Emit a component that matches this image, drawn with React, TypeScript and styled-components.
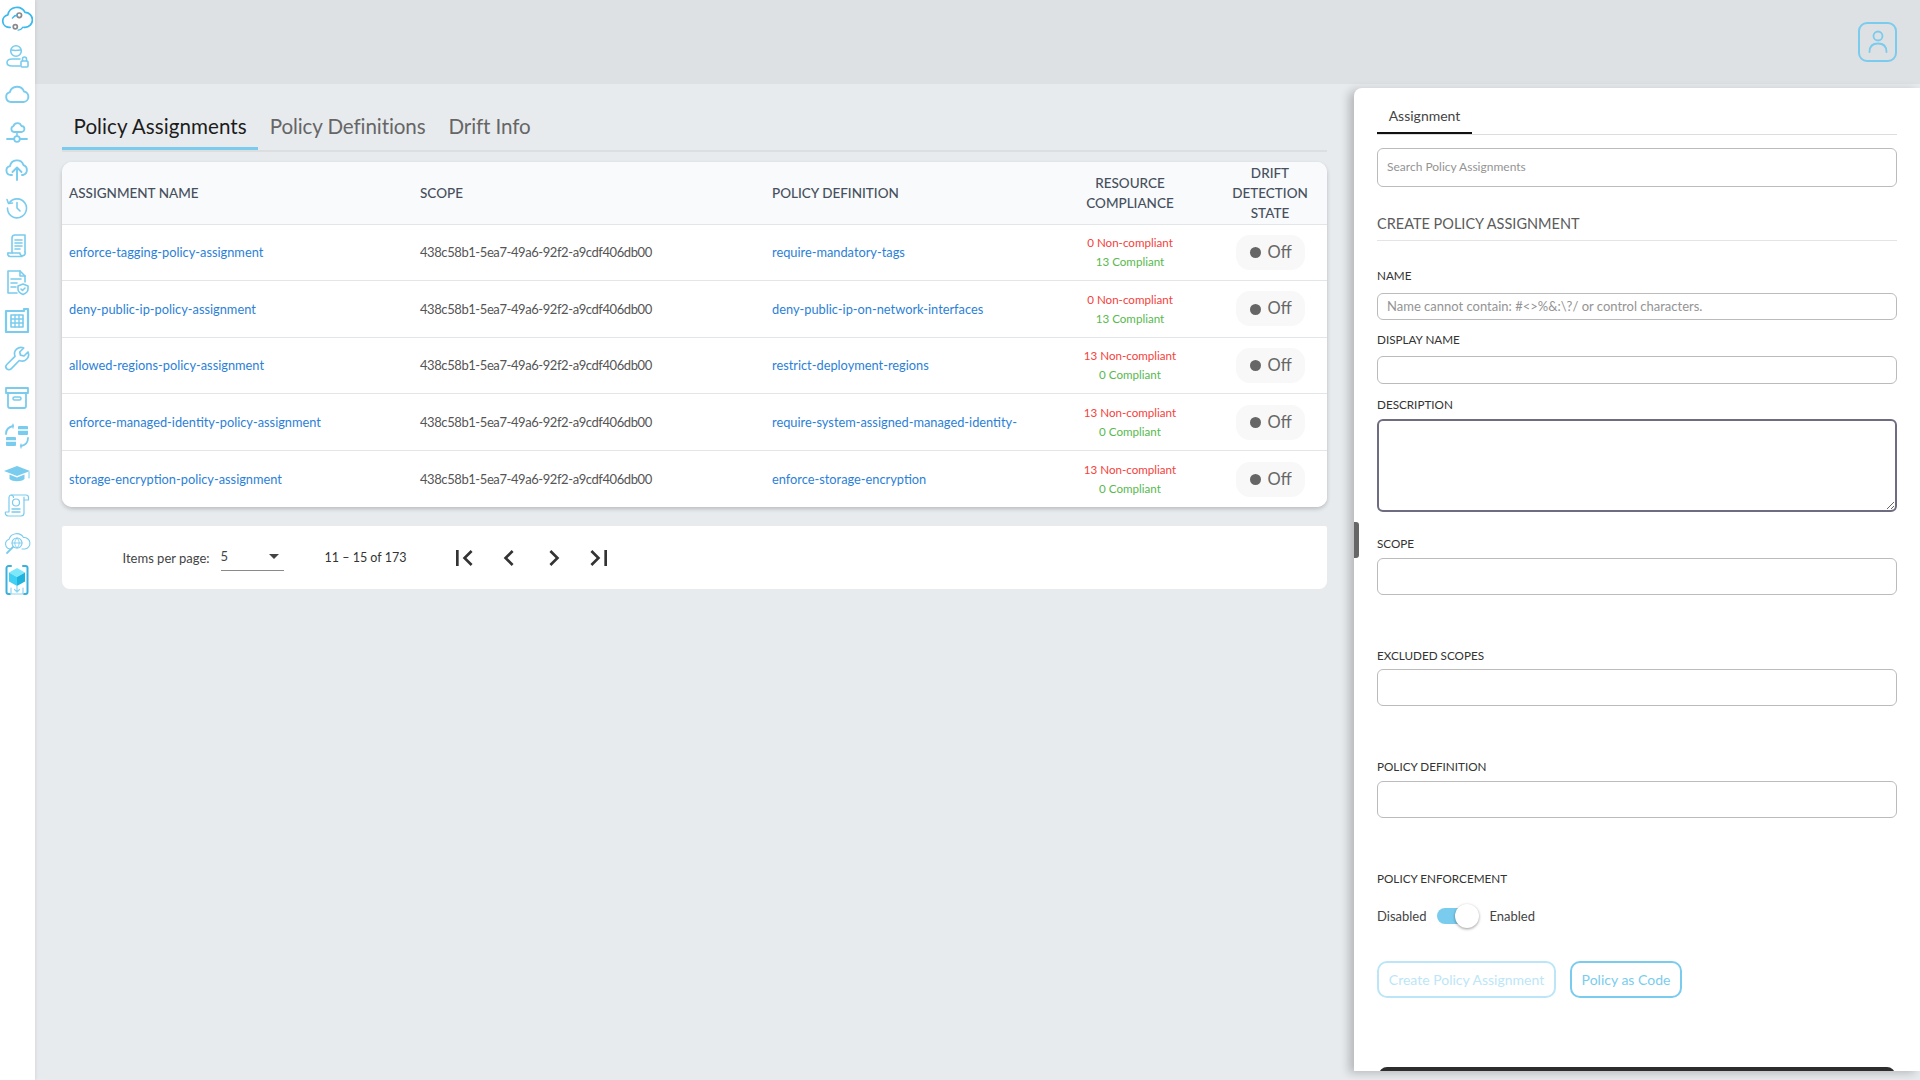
import React from "react";
import styled, { createGlobalStyle } from "styled-components";

const ACCENT = "#7accee";
const FONT = `Lato, "Noto Sans", "Liberation Sans", sans-serif`;

const Global = createGlobalStyle`
  html, body { margin: 0; padding: 0; height: 1080px; overflow: hidden; }
  body { font-family: ${FONT}; background: #e8ebee; }
  * { box-sizing: border-box; }
`;

const Shell = styled.div`
  display: grid;
  grid-template-columns: 35px 1fr;
  width: 1920px;
  height: 1080px;
  overflow: hidden;
`;
const Sidebar = styled.nav`
  background: #fff;
  display: flex;
  flex-direction: column;
  align-items: center;
  padding-right: 1px;
  box-shadow: 1px 0 3px rgba(0, 0, 0, 0.08);
  z-index: 2;
`;
const NavSlot = styled.div<{ $mt: number }>`
  height: 38px;
  flex: none;
  margin-top: ${(p) => p.$mt}px;
  display: flex;
  align-items: center;
  justify-content: center;
`;
const Main = styled.div`
  display: flex;
  flex-direction: column;
  min-width: 0;
`;
const TopBar = styled.header`
  height: 84px;
  flex: none;
  background: #dee1e4;
  display: flex;
  justify-content: flex-end;
  align-items: flex-start;
  padding: 22px 23px 0 0;
`;
const UserButton = styled.div`
  width: 39px;
  height: 40px;
  border: 2px solid ${ACCENT};
  border-radius: 9px;
  display: flex;
  align-items: center;
  justify-content: center;
`;
const Body = styled.div`
  flex: 1;
  display: flex;
  min-height: 0;
`;
const Content = styled.section`
  width: 1319px;
  flex: none;
  padding: 0 27px;
`;
const TabBar = styled.div`
  display: flex;
  height: 68px;
  border-bottom: 2px solid #dcdedf;
`;
const Tab = styled.div<{ $active?: boolean }>`
  height: 66px;
  padding: 24px 11.5px 0;
  font-size: 20.6px;
  line-height: 36px;
  letter-spacing: ${(p) => (p.$active ? "0.06px" : "-0.12px")};
  color: ${(p) => (p.$active ? "#1c1c1c" : "#666")};
  border-bottom: 3px solid ${(p) => (p.$active ? ACCENT : "transparent")};
  white-space: nowrap;
`;
const Card = styled.div`
  margin-top: 10px;
  background: #fff;
  border-radius: 10px;
  box-shadow: 0 2px 4px rgba(0, 0, 0, 0.2);
  overflow: hidden;
`;
const Row = styled.div<{ $head?: boolean }>`
  display: grid;
  grid-template-columns: 351px 352px 282px 166px 114px;
  align-items: center;
  height: ${(p) => (p.$head ? "62.5px" : "56.6px")};
  background: ${(p) => (p.$head ? "#f8fafc" : "#fff")};
  border-bottom: 1px solid #e3e6e8;
  &:last-child { border-bottom: 0; }
`;
const HeadCell = styled.div<{ $center?: boolean }>`
  padding: 0 7px;
  font-size: 13.5px;
  line-height: 20px;
  font-weight: 500;
  color: #47505c;
  text-transform: uppercase;
  text-align: ${(p) => (p.$center ? "center" : "left")};
`;
const LinkCell = styled.div`
  padding: 0 7px;
  font-size: 12.8px;
  color: #2c7fd8;
  white-space: nowrap;
`;
const TextCell = styled.div`
  padding: 0 7px;
  font-size: 13px;
  letter-spacing: -0.42px;
  color: #555;
  white-space: nowrap;
`;
const Compliance = styled.div`
  display: flex;
  flex-direction: column;
  align-items: center;
  font-size: 11.6px;
  line-height: 19px;
`;
const Bad = styled.span`
  color: #f4423c;
`;
const Good = styled.span`
  color: #58b94e;
`;
const ChipCell = styled.div`
  display: flex;
  justify-content: center;
`;
const Chip = styled.div`
  width: 69px;
  height: 35px;
  border-radius: 14px;
  background: #f8f8f8;
  display: flex;
  align-items: center;
  gap: 7px;
  padding: 0 0 1px 14px;
  font-size: 16.5px;
  color: #666;
`;
const Dot = styled.span`
  width: 11px;
  height: 11px;
  border-radius: 50%;
  background: #666;
  margin-top: 2px;
`;
const Pager = styled.div`
  margin-top: 19px;
  height: 63px;
  background: #fff;
  border-radius: 2px 2px 8px 8px;
  display: flex;
  align-items: center;
  padding-left: 60.5px;
  color: #444;
  font-size: 13px;
`;
const PerPage = styled.span`
  width: 98px;
`;
const PageSelect = styled.div`
  width: 63px;
  height: 26px;
  border-bottom: 1px solid #8a8a8a;
  display: flex;
  align-items: center;
  justify-content: space-between;
  padding: 0 5px 2px 0;
`;
const Caret = styled.span`
  width: 0;
  height: 0;
  border-left: 5px solid transparent;
  border-right: 5px solid transparent;
  border-top: 5px solid #444;
`;
const Range = styled.span`
  margin-left: 41px;
  width: 123.500px;
  color: #333;
  font-size: 12.5px;
`;
const PagerIcons = styled.div`
  display: flex;
  gap: 13px;
`;
const Panel = styled.aside`
  position: relative;
  margin-top: 4px;
  width: 566px;
  height: 983px;
  flex: none;
  background: #fff;
  border-top-left-radius: 8px;
  box-shadow: -5px 2px 10px rgba(0, 0, 0, 0.22);
  padding: 0 23px;
  overflow: hidden;
`;
const Handle = styled.div`
  position: absolute;
  left: 0;
  top: 434px;
  width: 5px;
  height: 36px;
  background: #666;
  border-radius: 0 3px 3px 0;
`;
const PanelTabs = styled.div`
  height: 47px;
  border-bottom: 1px solid #ddd;
  display: flex;
`;
const PanelTab = styled.div`
  width: 95px;
  height: 46px;
  padding-top: 18px;
  border-bottom: 2px solid #111;
  text-align: center;
  font-size: 14px;
  line-height: 20px;
  color: #444;
`;
const TextBox = styled.input<{ $h: number; $mt?: number; $size?: number }>`
  display: block;
  width: 100%;
  height: ${(p) => p.$h}px;
  margin-top: ${(p) => p.$mt ?? 0}px;
  padding: 0 9px 2px;
  border: 1px solid #bbb;
  border-radius: 6px;
  background: #fff;
  outline: none;
  font-family: ${FONT};
  font-size: ${(p) => p.$size ?? 12}px;
  &::placeholder { color: #949494; opacity: 1; }
`;
const SectionTitle = styled.h2`
  margin: 27px 0 0;
  padding-bottom: 7px;
  height: 27px;
  border-bottom: 1px solid #e4e4e4;
  font-size: 14.5px;
  line-height: 20px;
  font-weight: 400;
  color: #5c5c5c;
`;
const Label = styled.label<{ $mt: number; $mb?: number }>`
  display: block;
  margin-top: ${(p) => p.$mt}px;
  margin-bottom: ${(p) => p.$mb ?? 6}px;
  height: 16px;
  font-size: 11.7px;
  line-height: 14px;
  color: #333;
`;
const Description = styled.textarea`
  display: block;
  width: 100%;
  height: 93px;
  border: 2px solid #6e6c80;
  border-radius: 6px;
  outline: none;
  font-family: ${FONT};
`;
const ToggleRow = styled.div`
  margin-top: 17px;
  height: 24px;
  display: flex;
  align-items: center;
  font-size: 13px;
  color: #444;
`;
const ToggleTrack = styled.div`
  position: relative;
  width: 36px;
  height: 16px;
  margin: 0 16px 0 11px;
  border-radius: 8px;
  background: ${ACCENT};
`;
const ToggleThumb = styled.span`
  position: absolute;
  top: -4px;
  right: -6px;
  width: 24px;
  height: 24px;
  border-radius: 50%;
  background: #fff;
  box-shadow: 0 1px 3px rgba(0, 0, 0, 0.4);
`;
const ButtonRow = styled.div`
  margin-top: 33px;
  display: flex;
  gap: 14px;
`;
const OutlineButton = styled.button<{ $muted?: boolean; $w: number }>`
  width: ${(p) => p.$w}px;
  height: 37px;
  padding: 0;
  background: #fff;
  border: 2px solid ${(p) => (p.$muted ? "#bce6f7" : ACCENT)};
  border-radius: 10px;
  color: ${(p) => (p.$muted ? "#bce6f7" : ACCENT)};
  font-family: ${FONT};
  font-size: 14px;
`;
const DarkBar = styled.div`
  margin: 69px 2px 0;
  height: 20px;
  background: #2d2d2d;
  border-radius: 8px 8px 0 0;
`;

const S = { fill: "none", stroke: ACCENT, strokeWidth: 1.6, strokeLinecap: "round", strokeLinejoin: "round" } as const;

const Ico = ({ children, w = 28, h = 28 }: { children: React.ReactNode; w?: number; h?: number }) => (
  <svg width={w} height={h} viewBox="0 0 28 28" {...S}>
    {children}
  </svg>
);

const navIcons: { mt: number; icon: React.ReactNode }[] = [
  {
    mt: -2,
    icon: (
      <Ico w={32} h={32}>
        <path d="M8 23H7a5.500 5.500 0 0 1-1-10.900A8 8 0 0 1 21 10a6.500 6.500 0 0 1 0 13h-1" stroke="#38b9f0" strokeWidth={1.5} />
        <circle cx="16" cy="12.500" r="2" stroke="#8a8a8a" strokeWidth={1.5} />
        <circle cx="12.500" cy="22.500" r="1.800" stroke="#8a8a8a" strokeWidth={1.5} />
        <path d="M10 15c1-1.500 2.500-2.500 4-2.500M15 25.500c1.500 0 3-1 4-2.500" stroke="#38b9f0" strokeWidth={1.2} />
      </Ico>
    ),
  },
  {
    mt: 1,
    icon: (
      <Ico>
        <circle cx="13" cy="9" r="5.300" />
        <path d="M8.500 8c2 .5 6 .5 9 0" />
        <path d="M17 17H9c-3 0-5 1.500-5 3.500S6 24 9 24h8" />
        <rect x="18" y="19" width="7" height="6" rx="1" />
        <path d="M19.500 19v-2a2 2 0 0 1 4 0v2" />
      </Ico>
    ),
  },
  {
    mt: 0,
    icon: (
      <Ico>
        <path d="M8 22a5 5 0 0 1-1.200-9.800A7.500 7.500 0 0 1 21 11.500 5.300 5.300 0 0 1 20.500 22z" strokeWidth={1.9} />
      </Ico>
    ),
  },
  {
    mt: 0,
    icon: (
      <Ico>
        <path d="M11 14a3 3 0 0 1-.6-5.800 4.200 4.200 0 0 1 8-.2 3 3 0 0 1 0 6z" strokeWidth={1.8} />
        <path d="M14 14v4" />
        <circle cx="14" cy="21" r="2.800" strokeWidth={1.8} />
        <path d="M4 21h7M17 21h7" strokeWidth={1.8} />
      </Ico>
    ),
  },
  {
    mt: -1,
    icon: (
      <Ico>
        <path d="M9 20H8a4.500 4.500 0 0 1-1-8.900 7 7 0 0 1 13.500-1A5.200 5.200 0 0 1 20 20h-1" strokeWidth={1.9} />
        <path d="M14 25V13M9.500 17l4.500-4.500 4.500 4.500" strokeWidth={1.9} />
      </Ico>
    ),
  },
  {
    mt: 0,
    icon: (
      <Ico>
        <path d="M6.500 9.500A9.500 9.500 0 1 1 4.500 15" />
        <path d="M4 6.500l1.500 4 4-.5" />
        <path d="M14 9.500V15l3 3" />
      </Ico>
    ),
  },
  {
    mt: 0,
    icon: (
      <Ico>
        <path d="M9 22V7a3 3 0 0 1 3-3h10v17" />
        <path d="M5 22h12v1a2.500 2.500 0 0 0 5-2" />
        <path d="M7 25.500h12M7 25.500A2.500 2.500 0 0 1 5 22" />
        <path d="M12 9h7M12 12h7M12 15h7M12 18h5" />
      </Ico>
    ),
  },
  {
    mt: -1,
    icon: (
      <Ico>
        <path d="M14 25H5V3h12l5 5v6" />
        <path d="M17 3v5h5M8 11h10M8 15h6M8 19h5" />
        <path d="M15 18l5-2 5 2v3c0 3-2.500 4.500-5 5.500-2.500-1-5-2.500-5-5.500z" />
        <path d="M18 21l1.500 1.500 2.500-2.500" />
      </Ico>
    ),
  },
  {
    mt: 1,
    icon: (
      <Ico>
        <path d="M3 4h18V2h4v23H3z" strokeWidth={2.200} />
        <rect x="8" y="8" width="12" height="12" strokeWidth={1.6} />
        <path d="M12 8v12M16 8v12M8 12h12M8 16h12" strokeWidth={1.4} />
      </Ico>
    ),
  },
  {
    mt: 0,
    icon: (
      <Ico>
        <path d="M25 7l-4 4-3.500-.8L16.700 7l4-4a6.500 6.500 0 0 0-8.700 8.300L3.800 19.500a3 3 0 0 0 4.300 4.300l8.200-8.300A6.500 6.500 0 0 0 25 7z" strokeWidth={1.7} />
      </Ico>
    ),
  },
  {
    mt: 0,
    icon: (
      <Ico>
        <path d="M3 5h22v5H3z" strokeWidth={1.8} />
        <path d="M5 10v13a2 2 0 0 0 2 2h14a2 2 0 0 0 2-2V10" strokeWidth={1.8} />
        <rect x="10" y="14" width="8" height="3" rx="1.500" strokeWidth={1.6} />
      </Ico>
    ),
  },
  {
    mt: 1,
    icon: (
      <Ico>
        <rect x="15" y="4" width="10" height="9" rx="1" fill={ACCENT} stroke="none" />
        <rect x="3" y="15" width="10" height="9" rx="1" fill={ACCENT} stroke="none" />
        <path d="M15 8h10M3 19h10" stroke="#fff" />
        <path d="M3 12c0-4 2-7 7-8M25 16c0 4-2 7-7 8" strokeWidth={1.8} />
        <path d="M10 2v4M18 22v4" strokeWidth={1.2} />
      </Ico>
    ),
  },
  {
    mt: -1,
    icon: (
      <Ico>
        <path d="M1 12l13-5 13 5-13 5z" fill={ACCENT} stroke="none" />
        <path d="M6.500 15.500V20c3 3 12 3 15 0v-4.500L14 18.500z" fill={ACCENT} stroke="none" />
        <path d="M26 13v6" strokeWidth={1} />
      </Ico>
    ),
  },
  {
    mt: -5,
    icon: (
      <Ico>
        <path d="M8 3h15a2.500 2.500 0 0 1 2.500 2.500V8H21" strokeWidth={1.2} />
        <path d="M8 3a2.500 2.500 0 0 1 2.500 2.500M21 5v16a3 3 0 0 1-3 3H5a3 3 0 0 1-2.500-4H6V5.500A2.500 2.500 0 0 1 8 3" strokeWidth={1.2} />
        <circle cx="13" cy="10.500" r="3.500" strokeWidth={1.2} />
        <path d="M9 17h8M9 20h8" strokeWidth={1.4} />
      </Ico>
    ),
  },
  {
    mt: -1,
    icon: (
      <Ico>
        <path d="M7 20a5 5 0 0 1-1-9.700A8 8 0 0 1 20.500 8.500 5.800 5.800 0 0 1 22 20h-3" strokeWidth={1.1} />
        <circle cx="14" cy="14" r="5" strokeWidth={1.1} />
        <path d="M9 14h10M14 9c-3 3-3 7 0 10M14 9c3 3 3 7 0 10" strokeWidth={0.9} />
        <path d="M10 18l-6 6" strokeWidth={1.8} />
      </Ico>
    ),
  },
  {
    mt: 0,
    icon: (
      <svg width="24" height="34" viewBox="0 0 24 34" fill="none" strokeLinecap="round" strokeLinejoin="round">
        <path d="M6 2H3.500A2 2 0 0 0 1.500 4v24a2 2 0 0 0 2 2H5M18 2h2.500a2 2 0 0 1 2 2v24a2 2 0 0 1-2 2H19" stroke="#3bb0dd" strokeWidth={2} />
        <path d="M12 4l8 4.500-8 4.500-8-4.500z" fill="#7ee8fb" />
        <path d="M4 8.500l8 4.500v9l-8-4.500z" fill="#3fd0f3" />
        <path d="M20 8.500L12 13v9l8-4.500z" fill="#1fb4de" />
        <path d="M6 24v6h12v-6M12 22v6M9.500 25.500L12 28l2.500-2.500" stroke="#8fd6ee" strokeWidth={1.2} />
      </svg>
    ),
  },
];

const rows = [
  ["enforce-tagging-policy-assignment", "require-mandatory-tags", 0, 13],
  ["deny-public-ip-policy-assignment", "deny-public-ip-on-network-interfaces", 0, 13],
  ["allowed-regions-policy-assignment", "restrict-deployment-regions", 13, 0],
  ["enforce-managed-identity-policy-assignment", "require-system-assigned-managed-identity-", 13, 0],
  ["storage-encryption-policy-assignment", "enforce-storage-encryption", 13, 0],
] as const;

const pagerPaths = [
  "M18.41 16.59L13.82 12l4.59-4.59L17 6l-6 6 6 6zM6 6h2v12H6z",
  "M15.41 7.41L14 6l-6 6 6 6 1.41-1.41L10.83 12z",
  "M10 6L8.59 7.41 13.17 12l-4.58 4.59L10 18l6-6z",
  "M5.59 7.41L10.18 12l-4.59 4.59L7 18l6-6-6-6zM16 6h2v12h-2z",
];

export default function App() {
  return (
    <Shell>
      <Global />
      <Sidebar>
        {navIcons.map((n, i) => (
          <NavSlot key={i} $mt={n.mt}>
            {n.icon}
          </NavSlot>
        ))}
      </Sidebar>
      <Main>
        <TopBar>
          <UserButton>
            <svg width="22" height="26" viewBox="0 0 22 26" fill="none" stroke={ACCENT} strokeWidth="1.8" strokeLinecap="round">
              <circle cx="11" cy="7" r="4.500" />
              <path d="M2.500 23c0-6 3.500-8.500 8.500-8.500s8.500 2.500 8.500 8.500" />
            </svg>
          </UserButton>
        </TopBar>
        <Body>
          <Content>
            <TabBar>
              <Tab $active>Policy Assignments</Tab>
              <Tab>Policy Definitions</Tab>
              <Tab>Drift Info</Tab>
            </TabBar>
            <Card>
              <Row $head>
                <HeadCell>Assignment Name</HeadCell>
                <HeadCell>Scope</HeadCell>
                <HeadCell>Policy Definition</HeadCell>
                <HeadCell $center>
                  Resource
                  <br />
                  Compliance
                </HeadCell>
                <HeadCell $center>
                  Drift
                  <br />
                  Detection
                  <br />
                  State
                </HeadCell>
              </Row>
              {rows.map((r) => (
                <Row key={r[0]}>
                  <LinkCell>{r[0]}</LinkCell>
                  <TextCell>438c58b1-5ea7-49a6-92f2-a9cdf406db00</TextCell>
                  <LinkCell>{r[1]}</LinkCell>
                  <Compliance>
                    <Bad>{r[2]} Non-compliant</Bad>
                    <Good>{r[3]} Compliant</Good>
                  </Compliance>
                  <ChipCell>
                    <Chip>
                      <Dot />
                      Off
                    </Chip>
                  </ChipCell>
                </Row>
              ))}
            </Card>
            <Pager>
              <PerPage>Items per page:</PerPage>
              <PageSelect>
                <span>5</span>
                <Caret />
              </PageSelect>
              <Range>11 – 15 of 173</Range>
              <PagerIcons>
                {pagerPaths.map((d) => (
                  <svg key={d} width="32" height="32" viewBox="0 0 24 24" fill="#333">
                    <path d={d} />
                  </svg>
                ))}
              </PagerIcons>
            </Pager>
          </Content>
          <Panel>
            <Handle />
            <PanelTabs>
              <PanelTab>Assignment</PanelTab>
            </PanelTabs>
            <TextBox $h={39} $mt={13} placeholder="Search Policy Assignments" />
            <SectionTitle>CREATE POLICY ASSIGNMENT</SectionTitle>
            <Label $mt={27} $mb={9}>NAME</Label>
            <TextBox $h={27} $size={13} placeholder="Name cannot contain: #<>%&:\?/ or control characters." />
            <Label $mt={12} $mb={8}>DISPLAY NAME</Label>
            <TextBox $h={28} />
            <Label $mt={13}>DESCRIPTION</Label>
            <Description />
            <Label $mt={24}>SCOPE</Label>
            <TextBox $h={37} />
            <Label $mt={53} $mb={5}>EXCLUDED SCOPES</Label>
            <TextBox $h={37} />
            <Label $mt={53}>POLICY DEFINITION</Label>
            <TextBox $h={37} />
            <Label $mt={53} $mb={0}>POLICY ENFORCEMENT</Label>
            <ToggleRow>
              Disabled
              <ToggleTrack>
                <ToggleThumb />
              </ToggleTrack>
              Enabled
            </ToggleRow>
            <ButtonRow>
              <OutlineButton $muted $w={179}>Create Policy Assignment</OutlineButton>
              <OutlineButton $w={112}>Policy as Code</OutlineButton>
            </ButtonRow>
            <DarkBar />
          </Panel>
        </Body>
      </Main>
    </Shell>
  );
}
